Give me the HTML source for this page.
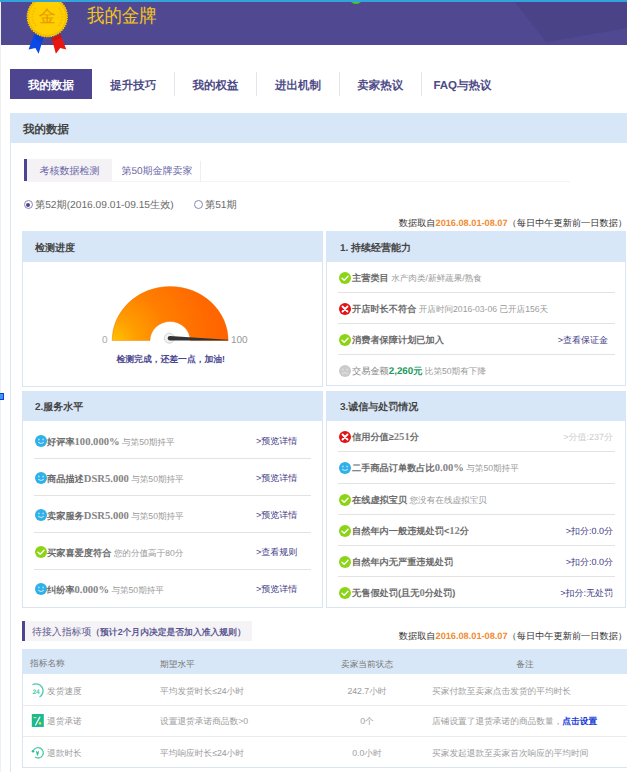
<!DOCTYPE html>
<html><head><meta charset="utf-8">
<style>
*{box-sizing:border-box;margin:0;padding:0}
html,body{width:627px;height:772px;overflow:hidden;background:#fff}
body{position:relative;font-family:"Liberation Sans",sans-serif;color:#666;font-size:10px;text-rendering:geometricPrecision}
.a{position:absolute;white-space:nowrap}
.r{position:absolute;white-space:nowrap;line-height:16px;height:16px;font-size:8.6px;color:#999}
.r b{color:#6b6b6b;font-weight:bold;font-size:9.2px}
.r .d{font-family:"Liberation Serif",serif;font-weight:bold;font-size:10.6px;color:#858585}
.rl{position:absolute;white-space:nowrap;line-height:16px;height:16px;font-size:9px;color:#3f3b85;font-weight:500}
.b{font-weight:bold}
.pur{color:#4d4a86}
.ph{position:absolute;background:#d8e7f7}
.pht{position:absolute;white-space:nowrap;font-weight:bold;font-size:10px;color:#444}
.pb{position:absolute;border:1px solid #dbe5f2;border-top:none}
.sep{position:absolute;height:1px;background:#e3e3e3}
.ic{position:absolute;width:12px;height:12px}
.src{position:absolute;white-space:nowrap;right:0px;line-height:16px;font-size:9.2px;color:#333;font-weight:500}
.src span{color:#f08a30;font-weight:bold}
.tr{position:absolute;white-space:nowrap;line-height:16px;height:16px;font-size:8.7px;color:#9c9c9c}
</style></head><body>
<svg width="0" height="0" style="position:absolute">
<defs>
<symbol id="ok" viewBox="0 0 12 12"><circle cx="6" cy="6" r="6" fill="#8cd416"/><path d="M3,6.2 L5.2,8.2 L9,4.2" fill="none" stroke="#fff" stroke-width="1.4" stroke-linecap="round" stroke-linejoin="round"/></symbol>
<symbol id="no" viewBox="0 0 12 12"><circle cx="6" cy="6" r="6" fill="#e01418"/><path d="M3.5,3.5 L8.5,8.5 M8.5,3.5 L3.5,8.5" fill="none" stroke="#fff" stroke-width="1.8" stroke-linecap="round"/></symbol>
<symbol id="sm" viewBox="0 0 12 12"><circle cx="6" cy="6" r="6" fill="#2eb0e8"/><rect x="3.2" y="3.6" width="1.4" height="1.8" rx=".6" fill="#bfe6f8"/><rect x="7.4" y="3.6" width="1.4" height="1.8" rx=".6" fill="#bfe6f8"/><path d="M3.2,7.2 Q6,9.8 8.8,7.2" fill="none" stroke="#bfe6f8" stroke-width="1.1"/></symbol>
<symbol id="sad" viewBox="0 0 12 12"><circle cx="6" cy="6" r="6" fill="#cbcbcb"/><rect x="3.2" y="3.6" width="1.4" height="1.8" rx=".6" fill="#e4e4e4"/><rect x="7.4" y="3.6" width="1.4" height="1.8" rx=".6" fill="#e4e4e4"/><path d="M3.2,9 Q6,6.6 8.8,9" fill="none" stroke="#e4e4e4" stroke-width="1.1"/></symbol>
</defs></svg>
<div class="a" style="left:0px;top:0;width:1px;height:772px;background:#eef0f6"></div>
<div class="a" style="left:-1px;top:393px;width:5px;height:7px;background:#3b9be8;border:1px solid #0a3cf0"></div>
<div class="a" style="left:1px;top:2px;width:626px;height:42.5px;background:#504992;overflow:hidden">
<svg width="626" height="42" style="position:absolute;left:0;top:0"><polygon points="512,-2 545,40 627,26 627,-2" fill="#4b4388"/></svg></div>
<div class="a" style="left:349px;top:-10px;width:14px;height:14px;border-radius:50%;background:#44cc22"></div>
<svg class="a" style="left:18px;top:-4px" width="60" height="62" viewBox="0 0 60 62">
  <polygon points="16.3,38 25.3,42.3 20.6,57.7 17.4,52 10.6,53.4" fill="#0a48e8"/>
  <polygon points="33.6,41.9 42.2,38 48.3,53.4 42.2,52 37.9,57.7" fill="#e81810"/>
  <polygon points="16.3,38 25.3,42.3 24,46 17,43" fill="#0a3cc0" opacity=".5"/>
  <polygon points="33.6,41.9 42.2,38 43.5,42 35,45" fill="#b81010" opacity=".5"/>
  <circle cx="29.3" cy="20.7" r="20" fill="#f9c500" stroke="#fcd200" stroke-width="1.4" stroke-dasharray="1.2 1.2"/>
  <circle cx="29.3" cy="20.7" r="18.6" fill="#ffcf00" stroke="#f5b800" stroke-width="1"/>
  <path d="M18,30 A13.5,13.5 0 0 1 18,11.4" fill="none" stroke="#f2b400" stroke-width="2" stroke-dasharray="1.6 1.4" opacity=".7"/>
  <path d="M40.6,30 A13.5,13.5 0 0 0 40.6,11.4" fill="none" stroke="#f2b400" stroke-width="2" stroke-dasharray="1.6 1.4" opacity=".7"/>
  <text x="29.3" y="25.5" text-anchor="middle" font-size="17" font-weight="500" fill="#e49a00">金</text>
</svg>
<div class="a" style="left:0;top:0;width:627px;height:2px;background:#33a3dc"></div>
<div class="a" style="left:87px;top:1.6px;font-size:17.4px;line-height:24px;color:#f5c414;font-weight:500;transform:scaleY(1.1);transform-origin:0 0">我的金牌</div>
<div class="a" style="left:10px;top:69px;width:82px;height:30px;background:#4e4590"></div>
<div class="a b" style="left:10.0px;top:69.5px;width:82px;line-height:33px;font-size:11.5px;text-align:center;color:#fff">我的数据</div>
<div class="a b" style="left:92.3px;top:69.5px;width:82px;line-height:33px;font-size:11.5px;text-align:center;color:#4d4a86">提升技巧</div>
<div class="a b" style="left:174.6px;top:69.5px;width:82px;line-height:33px;font-size:11.5px;text-align:center;color:#4d4a86">我的权益</div>
<div class="a" style="left:174px;top:72px;width:1px;height:24px;background:#e4e4ec"></div>
<div class="a b" style="left:256.9px;top:69.5px;width:82px;line-height:33px;font-size:11.5px;text-align:center;color:#4d4a86">进出机制</div>
<div class="a" style="left:256px;top:72px;width:1px;height:24px;background:#e4e4ec"></div>
<div class="a b" style="left:339.2px;top:69.5px;width:82px;line-height:33px;font-size:11.5px;text-align:center;color:#4d4a86">卖家热议</div>
<div class="a" style="left:339px;top:72px;width:1px;height:24px;background:#e4e4ec"></div>
<div class="a b" style="left:421.5px;top:69.5px;width:82px;line-height:33px;font-size:11.5px;text-align:center;color:#4d4a86">FAQ与热议</div>
<div class="a" style="left:421px;top:72px;width:1px;height:24px;background:#e4e4ec"></div>
<div class="ph" style="left:10px;top:113px;width:617px;height:30px"></div>
<div class="a b" style="left:23px;top:114.5px;line-height:30px;font-size:11.5px;color:#444">我的数据</div>
<div class="a" style="left:10px;top:143px;width:1px;height:629px;background:#dbe5f2"></div>
<div class="a" style="left:24px;top:181px;width:546px;height:1px;background:#f4f4f4"></div>
<div class="a" style="left:24px;top:159px;width:3px;height:22px;background:#4e4590"></div>
<div class="a" style="left:27px;top:159px;width:85px;height:22px;background:#f4f2f5"></div>
<div class="a" style="left:27px;top:159px;width:85px;line-height:26px;font-size:10px;text-align:center;color:#6c68a8">考核数据检测</div>
<div class="a" style="left:113px;top:159px;width:88px;line-height:26px;font-size:10px;text-align:center;color:#6c68a8">第50期金牌卖家</div>
<div class="a" style="left:200px;top:161px;width:1px;height:20px;background:#eee"></div>
<div class="a" style="left:23.5px;top:200px;width:9px;height:9px;border-radius:50%;border:1px solid #8a86b8"></div>
<div class="a" style="left:26px;top:202.5px;width:4px;height:4px;border-radius:50%;background:#4e4590"></div>
<div class="a" style="left:35px;top:197.8px;line-height:16px;font-size:10.2px;color:#6a6a6a">第52期(2016.09.01-09.15生效)</div>
<div class="a" style="left:194px;top:200px;width:9px;height:9px;border-radius:50%;border:1px solid #8a86b8"></div>
<div class="a" style="left:205px;top:197.8px;line-height:16px;font-size:10.2px;color:#6a6a6a">第51期</div>
<div class="src" style="top:215px">数据取自<span>2016.08.01-08.07</span>（每日中午更新前一日数据）</div>
<div class="ph" style="left:22px;top:231px;width:301px;height:31px"></div>
<div class="pht" style="left:35px;top:233px;line-height:31px">检测进度</div>
<div class="pb" style="left:22px;top:262px;width:301px;height:125px"></div>
<svg class="a" style="left:100px;top:280px" width="150" height="70" viewBox="0 0 150 70">
  <defs><radialGradient id="g1" gradientUnits="userSpaceOnUse" cx="14" cy="62" r="120">
      <stop offset="0" stop-color="#ffc400"/><stop offset="0.19" stop-color="#ff9e00"/><stop offset="0.46" stop-color="#ff7e00"/><stop offset="0.78" stop-color="#ff6a00"/><stop offset="1" stop-color="#ff6000"/>
  </radialGradient></defs>
  <path d="M12.1,60.5 A58,54 0 0 1 128.2,60.5 L90.2,60.5 A20.1,19 0 0 0 50,60.5 Z" fill="url(#g1)" stroke="#f07000" stroke-width=".4"/>
  <circle cx="69.3" cy="58.2" r="5" fill="#f2f2f2" stroke="#cfcfcf" stroke-width=".9"/>
  <path d="M70,56 L128,59.7 L128,60.5 L70,60.5 A2.25,2.25 0 0 1 70,56 Z" fill="#333"/>
</svg>
<div class="a" style="left:102px;top:332.5px;line-height:16px;font-size:10px;color:#aaa">0</div>
<div class="a" style="left:231px;top:332.5px;line-height:16px;font-size:10px;color:#999">100</div>
<div class="a" style="left:116.5px;top:351px;line-height:16px;font-size:8.8px;color:#4a4590;font-weight:bold">检测完成，还差一点，加油!</div>
<div class="ph" style="left:326px;top:231px;width:300px;height:31px"></div>
<div class="pht" style="left:340px;top:233px;line-height:31px">1. 持续经营能力</div>
<div class="pb" style="left:326px;top:262px;width:300px;height:124px"></div>
<div class="ph" style="left:22px;top:391px;width:301px;height:30px"></div>
<div class="pht" style="left:35px;top:393px;line-height:30px">2.服务水平</div>
<div class="pb" style="left:22px;top:421px;width:301px;height:187px"></div>
<div class="ph" style="left:326px;top:391px;width:300px;height:30px"></div>
<div class="pht" style="left:340px;top:393px;line-height:30px">3.诚信与处罚情况</div>
<div class="pb" style="left:326px;top:421px;width:300px;height:187px"></div>
<div class="sep" style="left:338px;top:292px;width:277px"></div>
<div class="sep" style="left:338px;top:323px;width:277px"></div>
<div class="sep" style="left:338px;top:354px;width:277px"></div>
<div class="sep" style="left:34px;top:458px;width:277px"></div>
<div class="sep" style="left:34px;top:495px;width:277px"></div>
<div class="sep" style="left:34px;top:532px;width:277px"></div>
<div class="sep" style="left:34px;top:569px;width:277px"></div>
<div class="sep" style="left:338px;top:451px;width:277px"></div>
<div class="sep" style="left:338px;top:483px;width:277px"></div>
<div class="sep" style="left:338px;top:514px;width:277px"></div>
<div class="sep" style="left:338px;top:545px;width:277px"></div>
<div class="sep" style="left:338px;top:576px;width:277px"></div>
<svg class="ic" style="left:339px;top:272px"><use href="#ok"/></svg>
<div class="r" style="left:352px;top:270.3px"><b>主营类目</b> 水产肉类/新鲜蔬果/熟食</div>
<svg class="ic" style="left:339px;top:303px"><use href="#no"/></svg>
<div class="r" style="left:352px;top:301.3px"><b>开店时长不符合</b> 开店时间2016-03-06 已开店156天</div>
<svg class="ic" style="left:339px;top:334px"><use href="#ok"/></svg>
<div class="r" style="left:352px;top:332.3px"><b>消费者保障计划已加入</b></div>
<div class="rl" style="right:19px;top:332.3px">&gt;查看保证金</div>
<svg class="ic" style="left:339px;top:365px"><use href="#sad"/></svg>
<div class="r" style="left:352px;top:363.3px"><span style="font-size:9.2px;color:#888">交易金额</span><b style="color:#1d9a5c;font-weight:bold"><span class="d" style="color:#1d9a5c;font-family:Liberation Sans;font-size:9.8px">2,260</span>元</b> 比第50期有下降</div>
<svg class="ic" style="left:35px;top:435px"><use href="#sm"/></svg>
<div class="r" style="left:47px;top:433.8px"><b>好评率<span class="d">100.000%</span></b> 与第50期持平</div>
<div class="rl" style="left:256px;top:432.8px">&gt;预览详情</div>
<svg class="ic" style="left:35px;top:472px"><use href="#sm"/></svg>
<div class="r" style="left:47px;top:470.8px"><b>商品描述<span class="d">DSR5.000</span></b> 与第50期持平</div>
<div class="rl" style="left:256px;top:469.8px">&gt;预览详情</div>
<svg class="ic" style="left:35px;top:509px"><use href="#sm"/></svg>
<div class="r" style="left:47px;top:507.8px"><b>卖家服务<span class="d">DSR5.000</span></b> 与第50期持平</div>
<div class="rl" style="left:256px;top:506.8px">&gt;预览详情</div>
<svg class="ic" style="left:35px;top:546px"><use href="#ok"/></svg>
<div class="r" style="left:47px;top:544.8px"><b>买家喜爱度符合</b> 您的分值高于80分</div>
<div class="rl" style="left:256px;top:543.8px">&gt;查看规则</div>
<svg class="ic" style="left:35px;top:583px"><use href="#sm"/></svg>
<div class="r" style="left:47px;top:581.8px"><b>纠纷率<span class="d">0.000%</span></b> 与第50期持平</div>
<div class="rl" style="left:256px;top:580.8px">&gt;预览详情</div>
<svg class="ic" style="left:339px;top:431px"><use href="#no"/></svg>
<div class="r" style="left:352px;top:429.3px"><b>信用分值≥<span class="d">251</span>分</b></div>
<div class="rl" style="right:14px;top:429.3px"><span style="color:#ccc">&gt;分值:237分</span></div>
<svg class="ic" style="left:339px;top:462px"><use href="#sm"/></svg>
<div class="r" style="left:352px;top:460.3px"><b>二手商品订单数占比<span class="d">0.00%</span></b> 与第50期持平</div>
<svg class="ic" style="left:339px;top:494px"><use href="#ok"/></svg>
<div class="r" style="left:352px;top:492.3px"><b>在线虚拟宝贝</b> 您没有在线虚拟宝贝</div>
<svg class="ic" style="left:339px;top:525px"><use href="#ok"/></svg>
<div class="r" style="left:352px;top:523.3px"><b>自然年内一般违规处罚&lt;<span class="d">12</span>分</b></div>
<div class="rl" style="right:14px;top:523.3px">&gt;扣分:0.0分</div>
<svg class="ic" style="left:339px;top:556px"><use href="#ok"/></svg>
<div class="r" style="left:352px;top:554.3px"><b>自然年内无严重违规处罚</b></div>
<div class="rl" style="right:14px;top:554.3px">&gt;扣分:0.0分</div>
<svg class="ic" style="left:339px;top:587px"><use href="#ok"/></svg>
<div class="r" style="left:352px;top:585.3px"><b>无售假处罚(且无<span class="d">0</span>分处罚)</b></div>
<div class="rl" style="right:14px;top:585.3px">&gt;扣分:无处罚</div>
<div class="a" style="left:22px;top:621px;width:3px;height:20px;background:#4e4590"></div>
<div class="a" style="left:25px;top:621px;width:227px;height:20px;background:#f5f3f6"></div>
<div class="a" style="left:32px;top:621.5px;line-height:20px;font-size:9.9px;color:#5b5891">待接入指标项<span style="font-size:8.8px;font-weight:bold">（预计2个月内决定是否加入准入规则）</span></div>
<div class="src" style="top:627.5px">数据取自<span>2016.08.01-08.07</span>（每日中午更新前一日数据）</div>
<div class="ph" style="left:22px;top:649px;width:605px;height:25px"></div>
<div class="a" style="left:22px;top:674px;width:1px;height:94px;background:#dbe5f2"></div>
<div class="a" style="left:22px;top:767px;width:605px;height:1px;background:#dbe5f2"></div>
<div class="sep" style="left:23px;top:705px;width:604px;background:#ececec"></div>
<div class="sep" style="left:23px;top:736px;width:604px;background:#ececec"></div>
<div class="tr" style="left:30px;top:654.5px;color:#777">指标名称</div>
<div class="tr" style="left:160px;top:656px;color:#777">期望水平</div>
<div class="tr" style="left:317px;width:100px;text-align:center;top:656px;color:#777">卖家当前状态</div>
<div class="tr" style="left:475px;width:100px;text-align:center;top:656px;color:#777">备注</div>
<svg class="a" style="left:30px;top:683px" width="14" height="15" viewBox="0 0 14 15"><path d="M2.5,1.8 A6,6 0 1 1 9.5,14" fill="none" stroke="#4cc9a8" stroke-width="1.3"/><text x="6" y="10.6" text-anchor="middle" font-size="6.5" font-weight="bold" fill="#4cc9a8">24</text></svg>
<div class="tr" style="left:47px;top:683px">发货速度</div>
<div class="tr" style="left:160px;top:683px">平均发货时长≤24小时</div>
<div class="tr" style="left:317px;width:100px;text-align:center;top:683px">242.7小时</div>
<div class="tr" style="left:432px;top:683px">买家付款至卖家点击发货的平均时长</div>
<svg class="a" style="left:31px;top:714px" width="13" height="13" viewBox="0 0 13 13"><rect x="0.8" y="0" width="12" height="13" fill="#1db894"/><rect x="2.5" y="3" width="3" height="1.2" fill="#e8e040"/><path d="M8.8,3.2 L4.6,11" stroke="#e6f6f0" stroke-width="1.4" stroke-linecap="round"/><path d="M9,7.5 L10.6,9.2 L9,10.9 L7.4,9.2 Z" fill="#f1e43a"/></svg>
<div class="tr" style="left:47px;top:713px">退货承诺</div>
<div class="tr" style="left:160px;top:713px">设置退货承诺商品数&gt;0</div>
<div class="tr" style="left:317px;width:100px;text-align:center;top:713px">0个</div>
<div class="tr" style="left:432px;top:713px">店铺设置了退货承诺的商品数量，<b style="color:#1a3dd8">点击设置</b></div>
<svg class="a" style="left:30px;top:745px" width="15" height="15" viewBox="0 0 15 15"><path d="M3.2,6 A5.2,5.2 0 1 1 5,12" fill="none" stroke="#4cc9a8" stroke-width="1.3"/><circle cx="3" cy="6.3" r="1.3" fill="#2cbf98"/><path d="M6,5.5 L7.5,7 L9,5.5 L8.5,9 L7.5,11 L6.5,9 Z" fill="#2cbf98"/></svg>
<div class="tr" style="left:47px;top:744.5px">退款时长</div>
<div class="tr" style="left:160px;top:744.5px">平均响应时长≤24小时</div>
<div class="tr" style="left:317px;width:100px;text-align:center;top:744.5px">0.0小时</div>
<div class="tr" style="left:432px;top:744.5px">买家发起退款至卖家首次响应的平均时间</div>
</body></html>
